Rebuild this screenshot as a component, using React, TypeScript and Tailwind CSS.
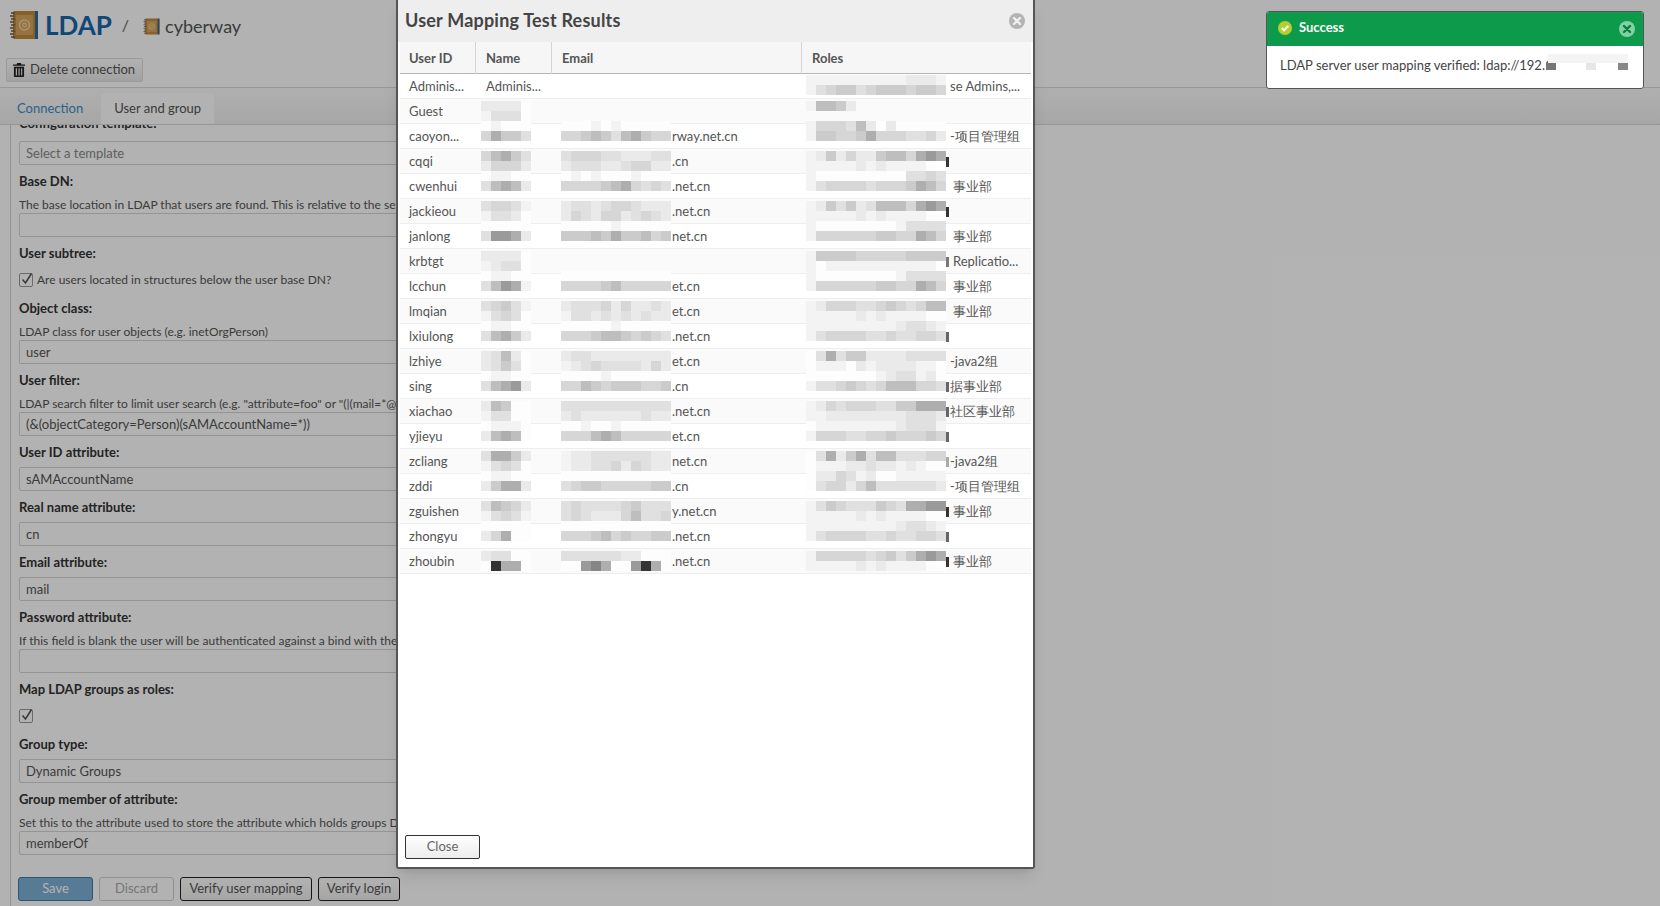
const shades: Record<string, string> = {
  '0': '#fdfdfd',
  '1': '#f3f3f3',
  '2': '#eaeaea',
  '3': '#e0e0e0',
  '4': '#d6d6d6',
  '5': '#cbcbcb',
  '6': '#bebebe',
  '7': '#aeaeae',
  '8': '#9a9a9a',
  '9': '#858585',
  x: '#333333',
};

type Row = {
  id: string;
  name?: string;
  nameTiles?: string;
  emailTiles?: string;
  email?: string;
  roleTiles?: string;
  role?: string;
  roleInset?: boolean;
  sliver?: string;
};

const rows: Row[] = [
  { id: 'Adminis...', name: 'Adminis...', roleTiles: '11111111112221|13455345554554', role: 'se Admins,...' },
  { id: 'Guest', nameTiles: '22220|13330', roleTiles: '16652' },
  { id: 'caoyon...', nameTiles: '01000|47553', emailTiles: '00010100000|44565367544', email: 'rway.net.cn', roleTiles: '14443620200000|15544574443342', role: '-项目管理组' },
  { id: 'cqqi', nameTiles: '46753|24442', emailTiles: '34443322233|23332234422', email: '.cn', roleTiles: '12524225664787|11111212111100', sliver: '#333333' },
  { id: 'cwenhui', nameTiles: '01100|36762', emailTiles: '01010001000|44445674343', email: '.net.cn', roleTiles: '10000000003343|13444434445764', role: '事业部', roleInset: true },
  { id: 'jackieou', nameTiles: '34431|13320', emailTiles: '23323443222|24324423432', email: '.net.cn', roleTiles: '12535236664787|11111212111100', sliver: '#333333' },
  { id: 'janlong', nameTiles: '00000|38872', emailTiles: '00000100000|55565755645', email: 'net.cn', roleTiles: '10000000013333|14444445544764', role: '事业部', roleInset: true },
  { id: 'krbtgt', nameTiles: '22220|12330', roleTiles: '15555444445555|10111111111110', role: 'Replicatio...', roleInset: true, sliver: '#777777' },
  { id: 'lcchun', nameTiles: '01100|36871', emailTiles: '00000000000|44445644444', email: 'et.cn', roleTiles: '10000000013333|14444445544764', role: '事业部', roleInset: true },
  { id: 'lmqian', nameTiles: '34531|13430', emailTiles: '23334242232|13323232322', email: 'et.cn', roleTiles: '12444334543466|11111212111100', role: '事业部', roleInset: true },
  { id: 'lxiulong', nameTiles: '01100|36752', emailTiles: '00000100000|44456654543', email: '.net.cn', roleTiles: '11111111123321|13444433433443', sliver: '#666666' },
  { id: 'lzhiye', nameTiles: '23620|23530', emailTiles: '23322222222|12343333242', email: 'et.cn', roleTiles: '03735522223333|01110212222110', role: '-java2组' },
  { id: 'sing', nameTiles: '01100|36782', emailTiles: '00001000000|44654555445', email: '.cn', roleTiles: '00000001233120|13345434666443', role: '据事业部', sliver: '#666666' },
  { id: 'xiachao', nameTiles: '26500|13300', emailTiles: '33333333333|23222222322', email: '.net.cn', roleTiles: '12434443355777|11222222223332', role: '社区事业部', sliver: '#666666' },
  { id: 'yjieyu', nameTiles: '01110|26760', emailTiles: '00100100000|44467644444', email: 'et.cn', roleTiles: '01111111123331|14443344544454', sliver: '#666666' },
  { id: 'zcliang', nameTiles: '37752|13430', emailTiles: '12233333322|12233424322', email: 'net.cn', roleTiles: '03725736633344|01112232212100', role: '-java2组', sliver: '#aaaaaa' },
  { id: 'zddi', nameTiles: '01100|25772', emailTiles: '00000000000|34554444455', email: '.cn', roleTiles: '02243120011111|03442463333332', role: '-项目管理组' },
  { id: 'zguishen', nameTiles: '36542|13431', emailTiles: '34333345333|34322246334', email: 'y.net.cn', roleTiles: '13543335437788|11111212111100', role: '事业部', roleInset: true, sliver: '#333333' },
  { id: 'zhongyu', nameTiles: '00000|24700', emailTiles: '00000000000|44456454455', email: '.net.cn', roleTiles: '11111111123321|13444433433443', sliver: '#666666' },
  { id: 'zhoubin', nameTiles: '23300|0x770', emailTiles: '33333322000|00897008x70', email: '.net.cn', roleTiles: '14444434535787|11111212111100', role: '事业部', roleInset: true, sliver: '#333333' },
];

// pixelated redaction blocks, two bands of 10px tiles
function Mosaic({ tiles, className }: { tiles: string; className: string }) {
  return (
    <div className={`absolute flex flex-col ${className}`}>
      {tiles.split('|').map((band, i) => (
        <div key={i} className="flex h-[10px]">
          {band.split('').map((c, j) => (
            <div key={j} className="h-[10px] w-[10px]" style={{ background: shades[c] }} />
          ))}
        </div>
      ))}
    </div>
  );
}

function BookIcon({ size }: { size: number }) {
  return (
    <svg width={size} height={size} viewBox="0 0 30 30">
      <rect x="4" y="1" width="25" height="28" rx="1.5" fill="#c08a3c" />
      <rect x="26" y="1" width="3" height="28" fill="#2d6a9a" />
      <rect x="7" y="5" width="17" height="20" rx="1" fill="#d8a55c" />
      <circle cx="15.5" cy="15" r="5" fill="none" stroke="#f0d3a2" strokeWidth="1.4" />
      <circle cx="15.5" cy="15" r="1.8" fill="none" stroke="#f0d3a2" strokeWidth="1.2" />
      <path
        d="M2 3h4M1 6h4M2 9h4M1 12h4M2 15h4M1 18h4M2 21h4M1 24h4M2 27h4"
        stroke="#6e5c46"
        strokeWidth="1.4"
      />
    </svg>
  );
}

function TrashIcon() {
  return (
    <svg width="12" height="14" viewBox="0 0 13 15" fill="#222">
      <path d="M4.5 0h4l.6 1.5H13V3H0V1.5h3.9z" />
      <path d="M1 4h11v10a1 1 0 0 1-1 1H2a1 1 0 0 1-1-1zm2 1.5v8h1.3v-8zm2.9 0v8h1.3v-8zm2.9 0v8h1.2v-8z" fillRule="evenodd" />
    </svg>
  );
}

function CloseDot({ bg, fg, size }: { bg: string; fg: string; size: number }) {
  return (
    <svg width={size} height={size} viewBox="0 0 16 16">
      <circle cx="8" cy="8" r="8" fill={bg} />
      <path d="M5 5l6 6M11 5l-6 6" stroke={fg} strokeWidth="2.4" strokeLinecap="round" />
    </svg>
  );
}

function Check() {
  return (
    <div className="relative h-[14px] w-[14px] rounded-[2px] border border-[#999] bg-white">
      <svg className="absolute -top-[2px] left-0" width="14" height="14" viewBox="0 0 14 14" fill="none">
        <path d="M2.5 7.5l3 3.5 6-9.5" stroke="#555" strokeWidth="1.6" />
      </svg>
    </div>
  );
}

function Label({ children }: { children: string }) {
  return <div className="h-[22px] text-[13px] leading-[22px] font-bold text-[#333]">{children}</div>;
}

function Help({ children }: { children: string }) {
  return (
    <div className="h-[21px] w-[378px] overflow-hidden whitespace-nowrap text-[12px] leading-[25px] text-[#555]">
      {children}
    </div>
  );
}

function Input({ value, muted }: { value?: string; muted?: boolean }) {
  return (
    <div
      className={`mb-[5px] h-[24px] w-[800px] rounded-[2px] border border-[#d4d4d4] bg-white px-[6px] text-[13px] leading-[22px] ${
        muted ? 'text-[#888]' : 'text-[#555]'
      }`}
    >
      {value}
    </div>
  );
}

function Field({ label, help, value, muted }: { label: string; help?: string; value?: string; muted?: boolean }) {
  return (
    <div>
      <Label>{label}</Label>
      {help ? <Help>{help}</Help> : <div className="h-[4px]" />}
      <Input value={value} muted={muted} />
    </div>
  );
}

function Form() {
  return (
    <div className="mt-[-13px] pl-[8px]">
      <Label>Configuration template:</Label>
      <div className="h-[7px]" />
      <Input value="Select a template" muted />
      <Field label="Base DN:" help="The base location in LDAP that users are found. This is relative to the server base DN." />
      <Label>User subtree:</Label>
      <div className="mb-[5px] flex h-[28px] items-center gap-[4px] pt-[4px] text-[12px] text-[#555]">
        <Check />
        Are users located in structures below the user base DN?
      </div>
      <Field label="Object class:" help="LDAP class for user objects (e.g. inetOrgPerson)" value="user" />
      <Field
        label="User filter:"
        help={'LDAP search filter to limit user search (e.g. "attribute=foo" or "(|(mail=*@example.com)(uid=test*))")'}
        value="(&(objectCategory=Person)(sAMAccountName=*))"
      />
      <Field label="User ID attribute:" value="sAMAccountName" />
      <Field label="Real name attribute:" value="cn" />
      <Field label="Email attribute:" value="mail" />
      <Field label="Password attribute:" help="If this field is blank the user will be authenticated against a bind with the LDAP server." />
      <Label>Map LDAP groups as roles:</Label>
      <div className="mb-[5px] flex h-[28px] items-center pt-[3px]">
        <Check />
      </div>
      <Field label="Group type:" value="Dynamic Groups" />
      <Field label="Group member of attribute:" help="Set this to the attribute used to store the attribute which holds groups DNs" value="memberOf" />
      <div className="mt-[22px] ml-[-1px] flex gap-[6px] text-[13px]">
        <button className="h-[24px] w-[75px] rounded-[3px] border border-[#3d78a8] bg-[#7fb0d6] text-white">Save</button>
        <button className="h-[24px] w-[75px] rounded-[3px] border border-[#d0d0d0] bg-white text-[#aaa]">Discard</button>
        <button className="h-[24px] w-[132px] rounded-[3px] border border-[#222] bg-gradient-to-b from-white to-[#eee] text-[#555]">
          Verify user mapping
        </button>
        <button className="h-[24px] w-[82px] rounded-[3px] border border-[#222] bg-gradient-to-b from-white to-[#eee] text-[#555]">
          Verify login
        </button>
      </div>
    </div>
  );
}

function ResultsModal() {
  return (
    <div className="absolute top-0 left-[396px] flex h-[869px] w-[639px] flex-col rounded-b-[3px] border-2 border-t-0 border-[#555] bg-white shadow-lg">
      <div className="flex h-[42px] shrink-0 items-center justify-between bg-[#eeeeee] pr-[8px] pl-[7px]">
        <div className="pb-[2px] text-[18px] font-bold tracking-[0.2px] text-[#444]">User Mapping Test Results</div>
        <CloseDot bg="#b4b4b4" fg="#eeeeee" size={16} />
      </div>
      <div className="mx-[2px] grid h-[32px] shrink-0 grid-cols-[76px_76px_250px_229px] border-b border-[#b5b5b5] bg-[#f6f6f6] text-[13px] leading-[32px] font-bold text-[#555]">
        <div className="border-r border-[#d4d4d4] pl-[9px]">User ID</div>
        <div className="border-r border-[#d4d4d4] pl-[10px]">Name</div>
        <div className="border-r border-[#d4d4d4] pl-[10px]">Email</div>
        <div className="pl-[10px]">Roles</div>
      </div>
      <div className="mx-[2px]">
        {rows.map((r, i) => (
          <div
            key={r.id}
            className={`grid h-[25px] grid-cols-[76px_76px_250px_229px] whitespace-nowrap border-b border-[#eeeeee] text-[13px] leading-[25px] text-[#555] ${
              i % 2 ? 'bg-[#fafafa]' : 'bg-white'
            }`}
          >
            <div className="pl-[9px]">{r.id}</div>
            <div className="relative pl-[10px]">
              {r.name}
              {r.nameTiles && (
                <Mosaic tiles={r.nameTiles} className={i % 2 ? 'top-[2px] left-[5px]' : 'top-[-3px] left-[5px]'} />
              )}
            </div>
            <div className="relative pl-[120px]">
              {r.email}
              {r.emailTiles && (
                <Mosaic tiles={r.emailTiles} className={i % 2 ? 'top-[2px] left-[9px]' : 'top-[-3px] left-[9px]'} />
              )}
            </div>
            <div className={`relative ${r.roleInset ? 'pl-[151px]' : 'pl-[148px]'}`}>
              {r.role}
              {r.roleTiles && (
                <Mosaic
                  tiles={r.roleTiles}
                  className={i % 2 ? 'top-[2px] left-[4px]' : i === 0 ? 'top-[1px] left-[4px]' : 'top-[-3px] left-[4px]'}
                />
              )}
              {r.sliver && (
                <div className="absolute top-[8px] left-[144px] h-[10px] w-[3px]" style={{ background: r.sliver }} />
              )}
            </div>
          </div>
        ))}
      </div>
      <div className="mt-auto mb-[8px] ml-[7px]">
        <button className="h-[24px] w-[75px] rounded-[2px] border border-[#333] bg-gradient-to-b from-white to-[#ececec] text-[13px] text-[#666]">
          Close
        </button>
      </div>
    </div>
  );
}

function Toast() {
  return (
    <div className="absolute top-[11px] left-[1266px] h-[78px] w-[378px] overflow-hidden rounded-[3px] border border-[#555] bg-white">
      <div className="flex h-[34px] items-center justify-between bg-[#0e9a4b] pr-[8px] pl-[11px]">
        <div className="flex items-center gap-[7px] pb-[3px] text-[13px] font-bold text-white">
          <svg width="14" height="14" viewBox="0 0 14 14">
            <circle cx="7" cy="7" r="7" fill="#b6cf2e" />
            <path d="M3.8 7l2.3 2.4 4.2-4.4" stroke="#fff" strokeWidth="2" fill="none" />
          </svg>
          Success
        </div>
        <CloseDot bg="#7fd3a3" fg="#0e7a3e" size={16} />
      </div>
      <div className="relative pt-[7px] pl-[13px] text-[13px] leading-[24px] text-[#444]">
        LDAP server user mapping verified: ldap://192.1
        <div className="absolute top-[8px] left-[279px] flex flex-col">
          <div className="ml-[2px] h-[9px] w-[80px] bg-[#f4f4f4]" />
          <div className="flex h-[7px]">
            <div className="h-[7px] w-[10px] bg-[#777]" />
            <div className="ml-[30px] h-[7px] w-[10px] bg-[#e6e6e6]" />
            <div className="ml-[22px] h-[7px] w-[10px] bg-[#888]" />
          </div>
        </div>
      </div>
    </div>
  );
}

export default function App() {
  return (
    <div className="relative h-[906px] overflow-hidden bg-white font-['Lato','Liberation_Sans',sans-serif]">
      <div className="flex h-[88px] flex-col border-b border-[#d8d8d8] pt-[9px] pl-[6px]">
        <div className="flex h-[32px] items-center">
          <div className="ml-[3px]">
            <BookIcon size={30} />
          </div>
          <div className="ml-[6px] text-[26px] font-bold text-[#1668ad]">LDAP</div>
          <div className="ml-[10px] text-[16px] text-[#666]">/</div>
          <div className="mt-[2px] ml-[14px]">
            <BookIcon size={17} />
          </div>
          <div className="mt-[3px] ml-[5px] text-[18px] text-[#555]">cyberway</div>
        </div>
        <button className="mt-[17px] flex h-[24px] w-[137px] items-center gap-[5px] rounded-[2px] border border-[#ddd] bg-gradient-to-b from-white to-[#e8e8e8] pl-[6px] text-[13px] text-[#555]">
          <TrashIcon />
          Delete connection
        </button>
      </div>
      <div className="flex h-[37px] border-b border-[#d8d8d8] bg-gradient-to-b from-[#fbfbfb] to-[#f0f0f0] pt-[5px] pl-[17px] text-[13px]">
        <div className="pt-[6px] text-[#3a8cc8]">Connection</div>
        <div className="ml-[18px] w-[113px] rounded-t-[3px] bg-white pt-[6px] text-center text-[#555]">User and group</div>
      </div>
      <div className="ml-[10px] h-[781px] overflow-hidden border-l border-[#d4d4d4]">
        <Form />
      </div>
      <div className="absolute inset-0 bg-black/30" />
      <ResultsModal />
      <Toast />
    </div>
  );
}
